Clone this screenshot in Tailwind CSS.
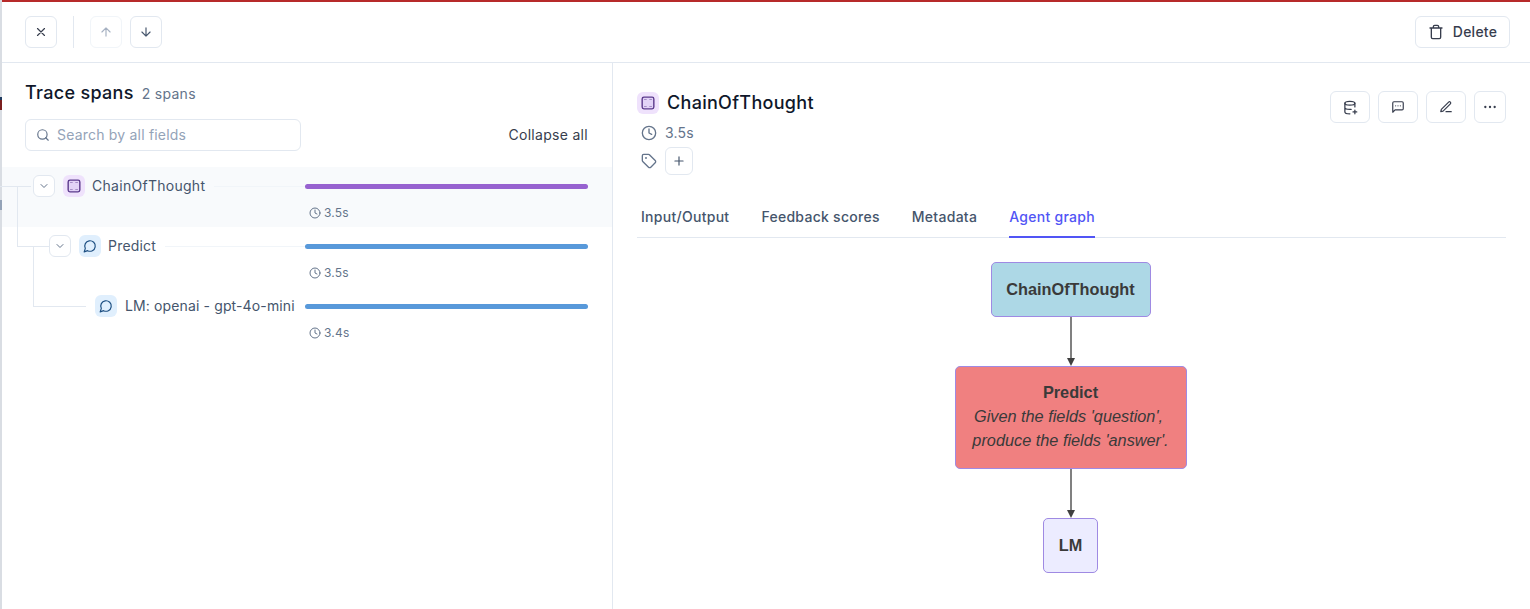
<!DOCTYPE html>
<html lang="en">

<head>
    <meta charset="UTF-8">
    <script src="https://cdn.jsdelivr.net/npm/@tailwindcss/browser@4"></script>
    <title>Trace</title>
</head>

<body class="bg-white h-[609px] w-[1530px] overflow-hidden font-['Inter',sans-serif] text-[#373d4d] relative">
    <!-- page behind the drawer -->
    <div class="absolute left-0 top-0 w-[2px] h-[609px] bg-[#d9dde3]"></div>
    <div class="absolute left-0 top-[97px] w-[2px] h-[3px] bg-[#1e3a5f]"></div>
    <div class="absolute left-0 top-[100px] w-[2px] h-[10px] bg-[#7a1f1f]"></div>
    <div class="absolute left-0 top-[200px] w-[2px] h-[10px] bg-[#94a3b8]"></div>

    <div class="ml-[2px] flex flex-col h-[609px]">
        <div class="h-[2px] bg-[#b72a2a] -ml-[2px]"></div>
        <!-- toolbar -->
        <header class="h-[61px] shrink-0 border-b border-[#e2e8f0] flex items-center pl-[23px] pr-[20px] pb-[1px]">
            <button class="size-8 rounded-md border border-[#e2e8f0] flex items-center justify-center text-[#373d4d]">
                <svg class="size-[14px]" viewBox="0 0 24 24" fill="none" stroke="currentColor" stroke-width="2" stroke-linecap="round"><path d="M18 6 6 18M6 6l12 12"/></svg>
            </button>
            <div class="w-px h-8 bg-[#e2e8f0] ml-4 mr-4"></div>
            <button class="size-8 rounded-md border border-[#f1f5f9] flex items-center justify-center text-[#a6b1c2]">
                <svg class="size-[14px]" viewBox="0 0 24 24" fill="none" stroke="currentColor" stroke-width="2" stroke-linecap="round" stroke-linejoin="round"><path d="M12 19V5M5 12l7-7 7 7"/></svg>
            </button>
            <button class="size-8 ml-2 rounded-md border border-[#e2e8f0] flex items-center justify-center text-[#45556c]">
                <svg class="size-[14px]" viewBox="0 0 24 24" fill="none" stroke="currentColor" stroke-width="2" stroke-linecap="round" stroke-linejoin="round"><path d="M12 5v14M19 12l-7 7-7-7"/></svg>
            </button>
            <button class="ml-auto h-8 w-[95px] rounded-md border border-[#e2e8f0] flex items-center justify-center gap-[9px] text-sm font-medium tracking-[0.25px] text-[#373d4d]">
                <svg class="size-4" viewBox="0 0 24 24" fill="none" stroke="currentColor" stroke-width="2" stroke-linecap="round" stroke-linejoin="round"><path d="M3 6h18M19 6v14a2 2 0 0 1-2 2H7a2 2 0 0 1-2-2V6M8 6V4a2 2 0 0 1 2-2h4a2 2 0 0 1 2 2v2"/></svg>
                Delete
            </button>
        </header>

        <div class="flex flex-1 min-h-0">
            <!-- trace spans -->
            <aside class="w-[611px] shrink-0 border-r border-[#e2e8f0]">
                <div class="pl-[23px] pr-[24px] pt-[16px]">
                    <div class="flex items-baseline h-6">
                        <h2 class="text-lg font-medium text-[#0f172a] tracking-[0.3px]">Trace spans</h2>
                        <span class="ml-2 text-sm text-[#64748b] tracking-[0.3px]">2 spans</span>
                    </div>
                    <div class="flex items-center justify-between mt-4">
                        <div class="w-[276px] h-8 rounded-md border border-[#e2e8f0] flex items-center pl-[10px] gap-[7px]">
                            <svg class="size-[14px] text-[#64748b]" viewBox="0 0 24 24" fill="none" stroke="currentColor" stroke-width="2" stroke-linecap="round"><circle cx="11" cy="11" r="8"/><path d="m21 21-4.3-4.3"/></svg>
                            <span class="text-sm tracking-[0.2px] text-[#94a3b8]">Search by all fields</span>
                        </div>
                        <span class="text-sm tracking-[0.3px] text-[#373d4d]">Collapse all</span>
                    </div>
                </div>

                <div class="relative mt-4">
                    <!-- tree connectors -->
                    <div class="absolute left-[15px] top-[19px] w-px h-[60px] bg-[#e2e8f0]"></div>
                    <div class="absolute left-[31px] top-[79px] w-px h-[60px] bg-[#e2e8f0]"></div>
                    <div class="absolute left-[-2px] top-[19px] w-[31px] h-px bg-[#e2e8f0]"></div>
                    <div class="absolute left-[15px] top-[79px] w-[32px] h-px bg-[#e2e8f0]"></div>
                    <div class="absolute left-[31px] top-[139px] w-[53px] h-px bg-[#e2e8f0]"></div>

                    <!-- ChainOfThought -->
                    <div class="h-[60px] bg-[#f8fafc] flex pt-[8px] pl-[31px]">
                        <button class="size-[22px] bg-white rounded-md border border-[#e2e8f0] flex items-center justify-center text-[#64748b] shrink-0">
                            <svg class="size-[12px]" viewBox="0 0 24 24" fill="none" stroke="currentColor" stroke-width="2" stroke-linecap="round" stroke-linejoin="round"><path d="m6 9 6 6 6-6"/></svg>
                        </button>
                        <span class="size-[22px] ml-2 rounded-md bg-[#efe2fc] flex items-center justify-center text-[#5b3a8c] shrink-0">
                            <svg class="size-[14px]" viewBox="0 0 24 24" fill="none" stroke="currentColor" stroke-width="2.4" stroke-linejoin="round"><rect x="2" y="2" width="20" height="20" rx="3" fill="#e2d3f7"/><path d="M6 6h3v.01H6zM15 6h3v.01h-3zM6 18h3v.01H6zM15 18h3v.01h-3z" stroke-width="2" opacity=".45"/></svg>
                        </span>
                        <span class="ml-[7px] text-sm tracking-[0.28px] leading-[22px] text-[#45556c] whitespace-nowrap">ChainOfThought</span>
                        <div class="h-px bg-[#f1f5f9] flex-1 mt-[11px] ml-[9px]"></div>
                        <div class="w-[283px] mr-[24px] shrink-0 pt-[9px]">
                            <div class="h-[5px] rounded-full bg-[#9762d0]"></div>
                            <div class="flex items-center gap-[3px] mt-[16px] pl-[4px] text-xs tracking-[0.2px] text-[#64748b]">
                                <svg class="size-3" viewBox="0 0 24 24" fill="none" stroke="currentColor" stroke-width="2" stroke-linecap="round" stroke-linejoin="round"><circle cx="12" cy="12" r="10"/><path d="M12 6v6l4 2"/></svg>
                                3.5s
                            </div>
                        </div>
                    </div>
                    <!-- Predict -->
                    <div class="h-[60px] flex pt-[8px] pl-[47px]">
                        <button class="size-[22px] bg-white rounded-md border border-[#e2e8f0] flex items-center justify-center text-[#64748b] shrink-0">
                            <svg class="size-[12px]" viewBox="0 0 24 24" fill="none" stroke="currentColor" stroke-width="2" stroke-linecap="round" stroke-linejoin="round"><path d="m6 9 6 6 6-6"/></svg>
                        </button>
                        <span class="size-[22px] ml-2 rounded-md bg-[#e0effd] flex items-center justify-center text-[#1d4f82] shrink-0">
                            <svg class="size-[14px]" viewBox="0 0 24 24" fill="none" stroke="currentColor" stroke-width="2" stroke-linecap="round" stroke-linejoin="round"><path d="M7.9 20A9 9 0 1 0 4 16.1L2 22Z"/></svg>
                        </span>
                        <span class="ml-[7px] text-sm tracking-[0.2px] leading-[22px] text-[#45556c] whitespace-nowrap">Predict</span>
                        <div class="h-px bg-[#f1f5f9] flex-1 mt-[11px] ml-[9px]"></div>
                        <div class="w-[283px] mr-[24px] shrink-0 pt-[9px]">
                            <div class="h-[5px] rounded-full bg-[#5899da]"></div>
                            <div class="flex items-center gap-[3px] mt-[16px] pl-[4px] text-xs tracking-[0.2px] text-[#64748b]">
                                <svg class="size-3" viewBox="0 0 24 24" fill="none" stroke="currentColor" stroke-width="2" stroke-linecap="round" stroke-linejoin="round"><circle cx="12" cy="12" r="10"/><path d="M12 6v6l4 2"/></svg>
                                3.5s
                            </div>
                        </div>
                    </div>
                    <!-- LM -->
                    <div class="h-[60px] flex pt-[8px] pl-[93px]">
                        <span class="size-[22px] rounded-md bg-[#e0effd] flex items-center justify-center text-[#1d4f82] shrink-0">
                            <svg class="size-[14px]" viewBox="0 0 24 24" fill="none" stroke="currentColor" stroke-width="2" stroke-linecap="round" stroke-linejoin="round"><path d="M7.9 20A9 9 0 1 0 4 16.1L2 22Z"/></svg>
                        </span>
                        <span class="ml-2 text-sm tracking-[0.13px] leading-[22px] text-[#45556c] whitespace-nowrap">LM: openai - gpt-4o-mini</span>
                        <div class="h-px flex-1"></div>
                        <div class="w-[283px] mr-[24px] shrink-0 pt-[9px]">
                            <div class="h-[5px] rounded-full bg-[#5899da]"></div>
                            <div class="flex items-center gap-[3px] mt-[16px] pl-[4px] text-xs tracking-[0.2px] text-[#64748b]">
                                <svg class="size-3" viewBox="0 0 24 24" fill="none" stroke="currentColor" stroke-width="2" stroke-linecap="round" stroke-linejoin="round"><circle cx="12" cy="12" r="10"/><path d="M12 6v6l4 2"/></svg>
                                3.4s
                            </div>
                        </div>
                    </div>
                </div>
            </aside>

            <!-- span details -->
            <main class="flex-1 min-w-0 pl-6 pr-6 pt-[28px]">
                <div class="flex justify-between">
                    <div>
                        <div class="flex items-center gap-2 h-[24px]">
                            <span class="size-[22px] rounded-md bg-[#efe2fc] flex items-center justify-center text-[#5b3a8c]">
                                <svg class="size-[14px]" viewBox="0 0 24 24" fill="none" stroke="currentColor" stroke-width="2.4" stroke-linejoin="round"><rect x="2" y="2" width="20" height="20" rx="3" fill="#e2d3f7"/><path d="M6 6h3v.01H6zM15 6h3v.01h-3zM6 18h3v.01H6zM15 18h3v.01h-3z" stroke-width="2" opacity=".45"/></svg>
                            </span>
                            <span class="text-lg font-medium tracking-[0.3px] text-[#0f172a]">ChainOfThought</span>
                        </div>
                        <div class="flex items-center gap-2 mt-[8px] pl-[4px] text-sm tracking-[0.2px] text-[#64748b]">
                            <svg class="size-[16px]" viewBox="0 0 24 24" fill="none" stroke="currentColor" stroke-width="2" stroke-linecap="round" stroke-linejoin="round"><circle cx="12" cy="12" r="10"/><path d="M12 6v6l4 2"/></svg>
                            3.5s
                        </div>
                        <div class="flex items-center gap-2 mt-[4px] pl-[4px]">
                            <svg class="size-[16px] text-[#64748b]" viewBox="0 0 24 24" fill="none" stroke="currentColor" stroke-width="2" stroke-linecap="round" stroke-linejoin="round"><path d="M12.6 2.6A2 2 0 0 0 11.2 2H4a2 2 0 0 0-2 2v7.2a2 2 0 0 0 .6 1.4l8.7 8.7a2.4 2.4 0 0 0 3.4 0l6.6-6.6a2.4 2.4 0 0 0 0-3.4z"/><circle cx="7.5" cy="7.5" r=".5" fill="currentColor"/></svg>
                            <button class="size-7 rounded-md border border-[#e2e8f0] flex items-center justify-center text-[#45556c]">
                                <svg class="size-[14px]" viewBox="0 0 24 24" fill="none" stroke="currentColor" stroke-width="2" stroke-linecap="round"><path d="M5 12h14M12 5v14"/></svg>
                            </button>
                        </div>
                    </div>
                    <div class="flex gap-2 text-[#373d4d]">
                        <button class="w-10 h-8 rounded-md border border-[#e2e8f0] flex items-center justify-center">
                            <svg class="size-[15px]" viewBox="0 0 24 24" fill="none" stroke="currentColor" stroke-width="2" stroke-linecap="round" stroke-linejoin="round"><ellipse cx="11" cy="5" rx="8" ry="3"/><path d="M3 5v14c0 1.7 3.6 3 8 3M19 5v6M3 12c0 1.7 3.6 3 8 3h2M19 16v6M16 19h6"/></svg>
                        </button>
                        <button class="w-10 h-8 rounded-md border border-[#e2e8f0] flex items-center justify-center">
                            <svg class="size-[14px]" viewBox="0 0 24 24" fill="none" stroke="currentColor" stroke-width="2" stroke-linecap="round" stroke-linejoin="round"><path d="M21 15a2 2 0 0 1-2 2H7l-4 4V5a2 2 0 0 1 2-2h14a2 2 0 0 1 2 2z"/><path d="M8 10h.01M12 10h.01M16 10h.01"/></svg>
                        </button>
                        <button class="w-10 h-8 rounded-md border border-[#e2e8f0] flex items-center justify-center">
                            <svg class="size-[14px]" viewBox="0 0 24 24" fill="none" stroke="currentColor" stroke-width="2" stroke-linecap="round" stroke-linejoin="round"><path d="M12 20h9"/><path d="M16.5 3.5a2.12 2.12 0 0 1 3 3L7 19l-4 1 1-4Z"/></svg>
                        </button>
                        <button class="size-8 rounded-md border border-[#e2e8f0] flex items-center justify-center">
                            <svg class="size-4" viewBox="0 0 24 24" fill="none" stroke="currentColor" stroke-width="3.5" stroke-linecap="round"><path d="M5 12h.01M12 12h.01M19 12h.01"/></svg>
                        </button>
                    </div>
                </div>

                <nav class="flex gap-8 mt-[26px] h-[37px] pl-1 border-b border-[#e2e8f0] text-sm font-medium tracking-[0.28px] text-[#45556c]">
                    <span class="h-[37px] pt-[6px]">Input/Output</span>
                    <span class="h-[37px] pt-[6px]">Feedback scores</span>
                    <span class="h-[37px] pt-[6px]">Metadata</span>
                    <span class="h-[37px] pt-[6px] border-b-2 border-[#5155f5] text-[#5155f5]">Agent graph</span>
                </nav>

                <!-- mermaid style graph -->
                <div class="flex flex-col items-center pt-6 pr-[2px] font-['Liberation_Sans',sans-serif] text-[16.3px] text-[#3a3a3a] text-center">
                    <div class="w-[160px] h-[55px] pb-[1px] rounded-[5px] border border-[#9f8ae3] bg-[#add8e6] flex items-center justify-center font-bold">ChainOfThought</div>
                    <div class="w-[2px] h-[41px] bg-[#808080]"></div>
                    <div class="size-0 border-x-[4px] border-x-transparent border-t-[8px] border-t-[#404040]"></div>
                    <div class="w-[232px] h-[103px] pb-[3px] rounded-[5px] border border-[#9f8ae3] bg-[#f08080] flex flex-col items-center justify-center leading-6">
                        <b>Predict</b>
                        <i class="pr-[4px]">Given the fields 'question',</i>
                        <i>produce the fields 'answer'.</i>
                    </div>
                    <div class="w-[2px] h-[41px] bg-[#808080]"></div>
                    <div class="size-0 border-x-[4px] border-x-transparent border-t-[8px] border-t-[#404040]"></div>
                    <div class="w-[55px] h-[55px] pb-[1px] rounded-[5px] border border-[#9f8ae3] bg-[#ececff] flex items-center justify-center font-bold">LM</div>
                </div>
            </main>
        </div>
    </div>
</body>

</html>
